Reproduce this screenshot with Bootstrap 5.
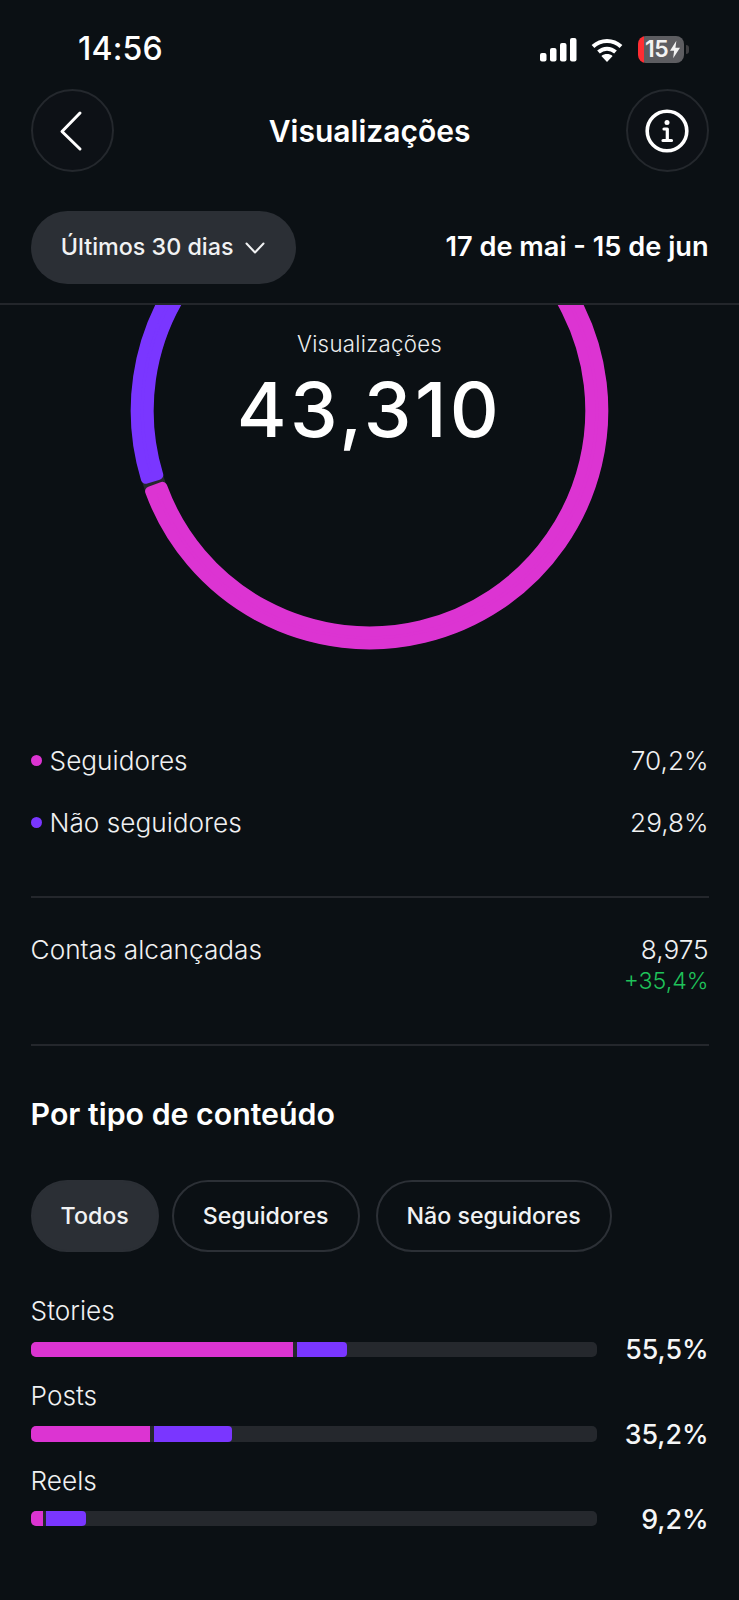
<!DOCTYPE html>
<html lang="pt-BR">
<head>
<meta charset="utf-8">
<title>Visualizações</title>
<link href="https://cdn.jsdelivr.net/npm/bootstrap@5.3.0/dist/css/bootstrap.min.css" rel="stylesheet">
<style>
html,body{background:#0b1014;}
body{width:739px;height:1600px;overflow:hidden;font-family:Inter,"Liberation Sans",sans-serif;color:#f5f6f7;}
.stat-bar{height:89px;padding:29px 50px 0 78px;}
.stat-time{font-size:32px;font-weight:500;line-height:40px;color:#fff;letter-spacing:.2px;}
.batt{width:46px;height:27px;border-radius:8px;background:linear-gradient(90deg,#ff2d33 0 6px,#5d5d61 6px);font-size:23px;font-weight:600;line-height:27px;color:#f2f2f2;padding-left:7px;letter-spacing:-.5px;}
.batt-nub{width:3px;height:9px;border-radius:0 3px 3px 0;background:#3d3d40;margin-left:2px;}
.nav-row{height:83px;padding:0 30.4px 0 30.6px;}
.round-btn{width:83px;height:83px;padding:0;border:2px solid #24282d;background:#0d1116;}
.nav-title{font-size:30px;font-weight:600;color:#fff;line-height:1;}
.filter-row{margin-top:39px;height:94px;padding:0 30.4px 19px 30.6px;border-bottom:2px solid #23262b;}
.filter-pill{width:265px;height:73px;padding:0;border:0;background:#2b2f35;color:#f1f2f3;font-size:23.3px;font-weight:500;gap:12px;}
.date-range{font-size:27.2px;font-weight:600;color:#fff;}
.ring-wrap{height:425px;}
.ring-svg{display:block;}
.ring-label{top:24px;left:0;right:0;font-size:22.2px;font-weight:300;line-height:30px;letter-spacing:.3px;color:#eceeef;}
.ring-num{top:59px;left:0;right:0;font-size:76px;font-weight:500;line-height:90px;color:#fff;letter-spacing:3.4px;}
.body-pad{padding:0 30.4px 0 30.6px;}
.leg-row{height:62px;font-size:26.2px;font-weight:300;color:#f0f1f2;}
.leg-dot{width:11px;height:11px;margin-right:8px;}
.dot-pink{background:#dc34d2;}
.dot-violet{background:#7a36ff;}
.sep{height:2px;background:#24272c;}
.sep-a{margin-top:42px;}
.reach-row{height:146px;padding-top:36px;font-size:26.2px;font-weight:300;line-height:32px;color:#f0f1f2;}
.reach-up{font-size:23.2px;line-height:28px;margin-top:1px;color:#1fc25a;}
.reach-sep{margin-top:0;}
.sect-title{font-size:30.3px;font-weight:600;color:#fff;line-height:1;margin:53px 0 0;}
.chips{margin-top:51px;gap:13px;}
.chip{height:72px;padding:0 29px;border:2px solid #2c3036;background:transparent;color:#f1f2f3;font-size:23.2px;font-weight:500;}
.chip-on{background:#2b2f35;border-color:#2b2f35;padding:0 28px;}
.chip-last{margin-left:3px;}
.bars{margin-top:43px;}
.bar-item{height:84.7px;}
.bar-name{font-size:26.2px;font-weight:300;line-height:32px;color:#f0f1f2;height:32px;margin-bottom:0;}
.bar-line{height:44px;margin-top:0;}
.bar-track{width:566px;height:15.5px;background:#25282d;border-radius:5px;gap:3.5px;}
.bar-seg{border-radius:0;}
.seg-end{border-radius:0 4px 4px 0;}
.bar-pct{font-size:26.8px;font-weight:500;color:#f5f6f7;}
</style>
</head>
<body>
<div class="stat-bar d-flex justify-content-between align-items-start">
  <span class="stat-time">14:56</span>
  <div class="d-flex align-items-center" style="margin-top:7px">
    <svg width="37" height="24" viewBox="0 0 37 24" fill="#fff" aria-hidden="true" style="margin-right:14px"><rect x="0" y="15" width="6.5" height="8.6" rx="2"/><rect x="10" y="10" width="6.5" height="13.6" rx="2"/><rect x="20" y="5" width="6.5" height="18.6" rx="2"/><rect x="30" y="0" width="6.5" height="23.6" rx="2"/></svg>
    <svg width="32" height="24" viewBox="0 0 32 24" fill="none" stroke="#fff" stroke-width="4" aria-hidden="true" style="margin-right:15px"><path d="M2 8.5C10 1 22 1 30 8.5"/><path d="M7.5 14C12.5 9.6 19.5 9.6 24.500 14"/><path d="M16 24l-5.600-6c3.300-2.600 7.900-2.600 11.200 0z" fill="#fff" stroke="none"/></svg>
    <div class="batt d-flex align-items-center"><span>15</span><svg width="10" height="19" viewBox="0 0 11 19" fill="#f2f2f2" aria-hidden="true" style="margin-left:2px"><path d="M7 0 0 11h4.500L3.500 19 11 7.500H6z"/></svg></div>
    <div class="batt-nub"></div>
  </div>
</div>

<div class="nav-row d-flex justify-content-between align-items-center">
  <button class="btn round-btn rounded-circle d-flex align-items-center justify-content-center" type="button" aria-label="Voltar">
    <svg width="26" height="42" viewBox="0 0 26 42" fill="none" stroke="#fff" stroke-width="3" stroke-linecap="round" stroke-linejoin="round" aria-hidden="true" style="margin-right:3px"><path d="M22 3 4 21.500 22 39"/></svg>
  </button>
  <span class="nav-title">Visualizações</span>
  <button class="btn round-btn rounded-circle d-flex align-items-center justify-content-center" type="button" aria-label="Informação">
    <svg width="44" height="44" viewBox="0 0 44 44" fill="none" stroke="#fff" aria-hidden="true"><circle cx="22" cy="22" r="19.800" stroke-width="3.600"/><circle cx="22" cy="13.500" r="2.500" fill="#fff" stroke="none"/><path d="M19 20h3.300v11M18 31.500h8.500" stroke-width="3.200" stroke-linecap="round" stroke-linejoin="round"/></svg>
  </button>
</div>

<div class="filter-row d-flex justify-content-between align-items-center">
  <button class="btn filter-pill rounded-pill d-flex align-items-center justify-content-center" type="button">
    <span>Últimos 30 dias</span>
    <svg width="20" height="12" viewBox="0 0 20 12" fill="none" stroke="#f1f2f3" stroke-width="2" stroke-linecap="round" stroke-linejoin="round" aria-hidden="true"><path d="M1.500 1.500 10 10.500l8.500-9"/></svg>
  </button>
  <span class="date-range">17 de mai - 15 de jun</span>
</div>

<div class="ring-wrap position-relative overflow-hidden">
  <svg class="ring-svg" width="739" height="425" viewBox="0 305 739 425" aria-hidden="true">
    <circle cx="369.500" cy="410.600" r="227.300" fill="none" stroke="#25282d" stroke-width="22"/>
    <path d="M369.500 176.800A233.800 233.800 0 0 0 145.850 478.730L158.280 474.940A220.800 220.800 0 0 1 369.500 189.800Z" fill="#7a36ff" stroke="#7a36ff" stroke-width="10" stroke-linejoin="round"/>
    <path d="M150.080 491.330A233.800 233.800 0 1 0 369.500 176.800L369.500 189.800A220.800 220.800 0 1 1 162.280 486.840Z" fill="#dc34d2" stroke="#dc34d2" stroke-width="10" stroke-linejoin="round"/>
  </svg>
  <div class="ring-label position-absolute text-center">Visualizações</div>
  <div class="ring-num position-absolute text-center">43,310</div>
</div>

<div class="body-pad">
  <div class="leg-row d-flex justify-content-between align-items-center">
    <span class="d-flex align-items-center"><span class="leg-dot dot-pink rounded-circle"></span>Seguidores</span><span>70,2%</span>
  </div>
  <div class="leg-row d-flex justify-content-between align-items-center">
    <span class="d-flex align-items-center"><span class="leg-dot dot-violet rounded-circle"></span>Não seguidores</span><span>29,8%</span>
  </div>
  <div class="sep sep-a"></div>
  <div class="reach-row d-flex justify-content-between align-items-start">
    <span>Contas alcançadas</span>
    <div class="text-end"><div>8,975</div><div class="reach-up">+35,4%</div></div>
  </div>
  <div class="sep reach-sep"></div>
  <h2 class="sect-title">Por tipo de conteúdo</h2>
  <div class="chips d-flex">
    <button class="btn chip chip-on rounded-pill" type="button">Todos</button>
    <button class="btn chip rounded-pill" type="button">Seguidores</button>
    <button class="btn chip chip-last rounded-pill" type="button">Não seguidores</button>
  </div>
  <div class="bars">
    <div class="bar-item">
      <div class="bar-name">Stories</div>
      <div class="bar-line d-flex justify-content-between align-items-center">
        <div class="bar-track d-flex overflow-hidden"><div class="bar-seg dot-pink" style="width:262.500px"></div><div class="bar-seg seg-end dot-violet" style="width:50px"></div></div>
        <span class="bar-pct">55,5%</span>
      </div>
    </div>
    <div class="bar-item">
      <div class="bar-name">Posts</div>
      <div class="bar-line d-flex justify-content-between align-items-center">
        <div class="bar-track d-flex overflow-hidden"><div class="bar-seg dot-pink" style="width:119.500px"></div><div class="bar-seg seg-end dot-violet" style="width:78px"></div></div>
        <span class="bar-pct">35,2%</span>
      </div>
    </div>
    <div class="bar-item">
      <div class="bar-name">Reels</div>
      <div class="bar-line d-flex justify-content-between align-items-center">
        <div class="bar-track d-flex overflow-hidden"><div class="bar-seg dot-pink" style="width:12px"></div><div class="bar-seg seg-end dot-violet" style="width:40px"></div></div>
        <span class="bar-pct">9,2%</span>
      </div>
    </div>
  </div>
</div>
<script src="https://cdn.jsdelivr.net/npm/bootstrap@5.3.0/dist/js/bootstrap.bundle.min.js"></script>
</body>
</html>
